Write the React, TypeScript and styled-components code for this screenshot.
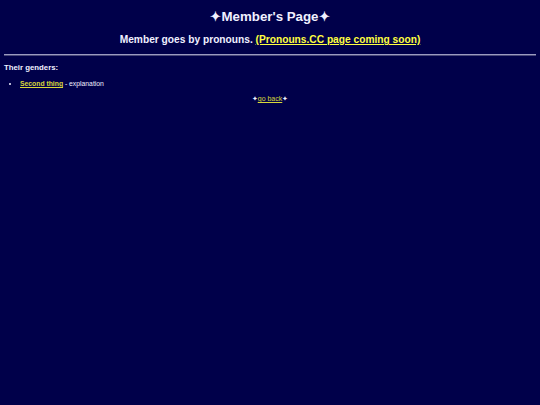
import styled, { createGlobalStyle } from 'styled-components';

const GlobalStyle = createGlobalStyle`
  html, body {
    margin: 0;
    background: #00004a;
  }
  body {
    padding: 4px;
    color: #f0f0ff;
    font-family: "Liberation Sans", Arial, sans-serif;
  }
`;

const Title = styled.h1`
  margin: 3px 0 0;
  text-align: center;
  font-size: 13.3px;
  font-weight: bold;
  line-height: 20px;
`;

const Subtitle = styled.p`
  margin: 6px 0 0;
  text-align: center;
  font-size: 10.2px;
  font-weight: bold;
  line-height: 14px;
`;

const Link = styled.a<{ $dim?: boolean }>`
  color: ${p => (p.$dim ? '#d8d83a' : '#ffff40')};
  text-decoration: underline;
`;

const Rule = styled.hr`
  margin: 7px 0 0;
  border: none;
  border-top: 1px solid #9a9ac0;
  border-bottom: 1px solid #484878;
`;

const Heading = styled.h3`
  margin: 6px 0 0;
  font-size: 7.8px;
  font-weight: bold;
  line-height: 12px;
`;

const List = styled.ul`
  margin: 5px 0 0;
  padding-left: 16px;
  font-size: 6.8px;
  line-height: 10px;
  list-style: disc;
`;

const Footer = styled.p`
  margin: 5px 0 0;
  text-align: center;
  font-size: 7px;
  line-height: 10px;
`;

export default function App() {
  return (
    <>
      <GlobalStyle />
      <Title>✦Member's Page✦</Title>
      <Subtitle>
        Member goes by pronouns. <Link href="#">(Pronouns.CC page coming soon)</Link>
      </Subtitle>
      <Rule />
      <Heading>Their genders:</Heading>
      <List>
        <li>
          <Link $dim href="#"><b>Second thing</b></Link> - explanation
        </li>
      </List>
      <Footer>
        ✦<Link $dim href="#">go back</Link>✦
      </Footer>
    </>
  );
}
